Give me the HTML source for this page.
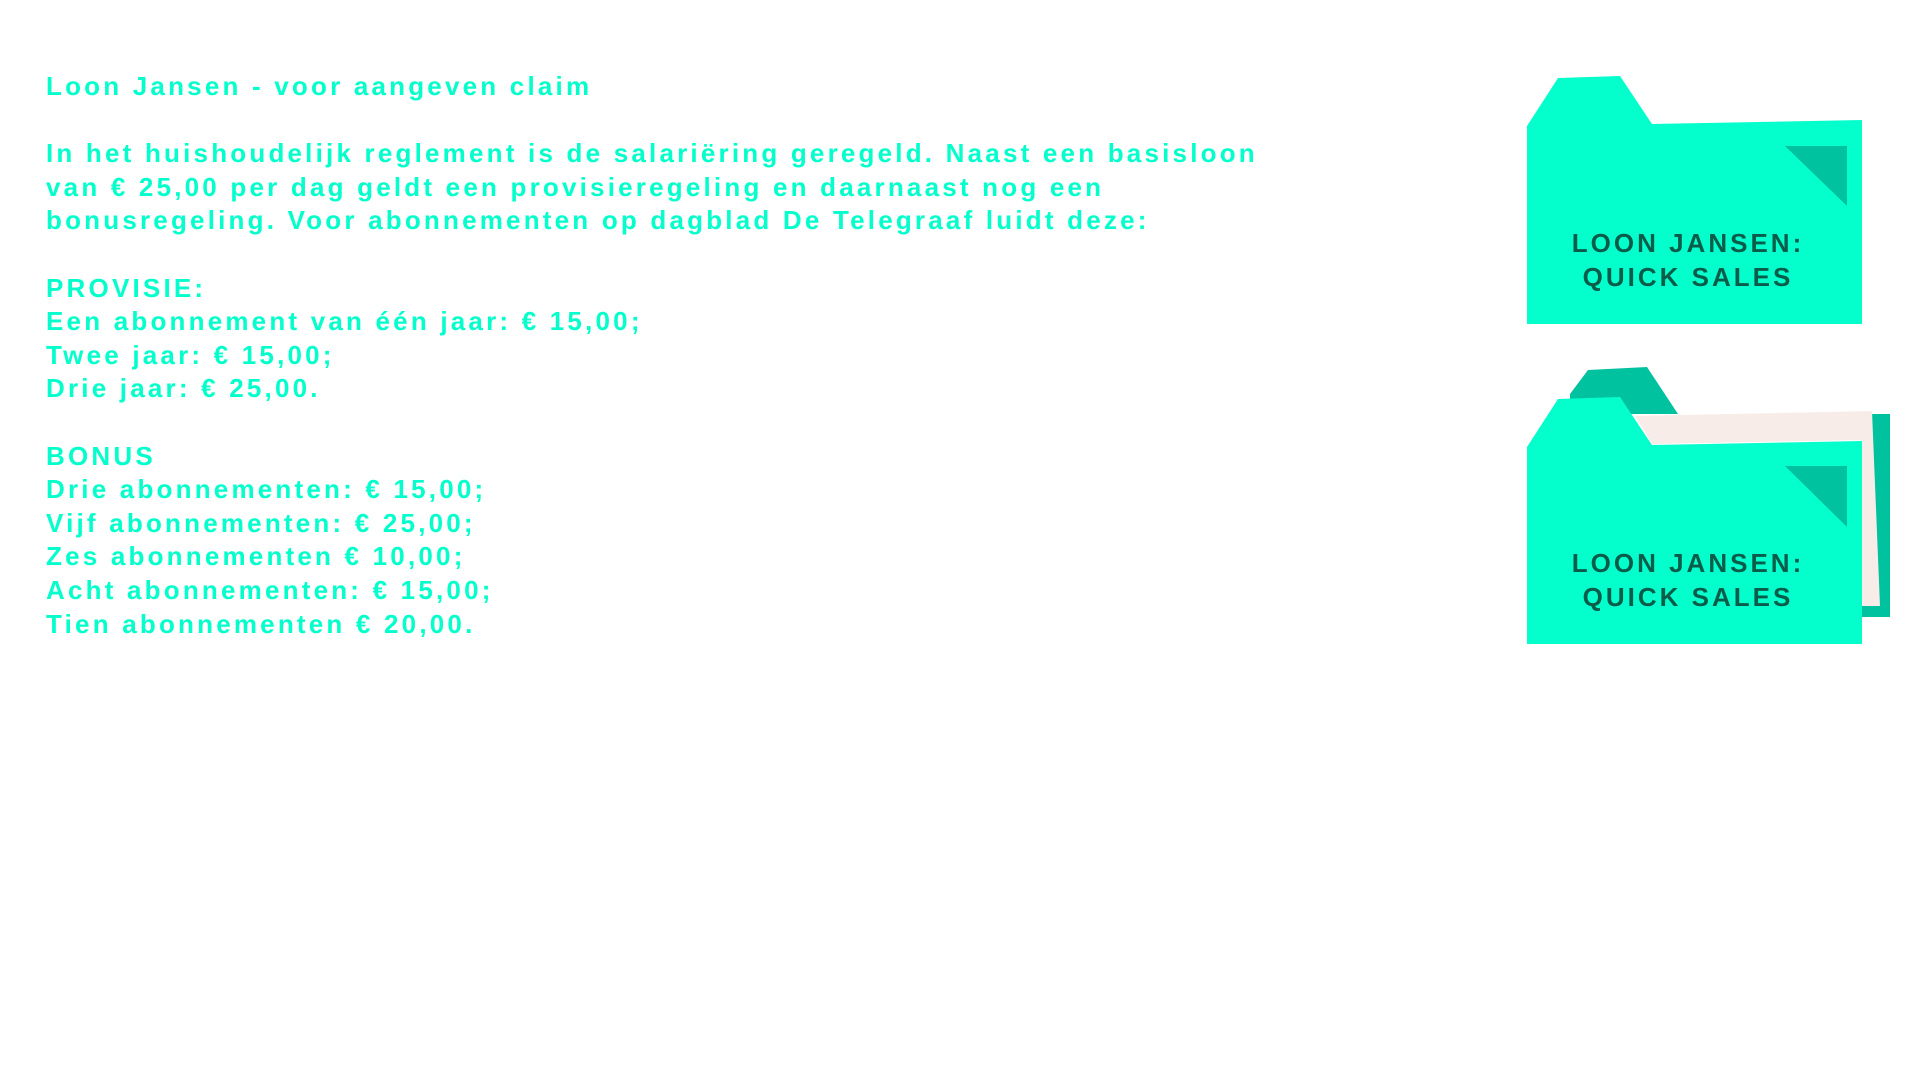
<!DOCTYPE html>
<html><head><meta charset="utf-8"><style>
html,body{margin:0;padding:0;background:#fff;width:1920px;height:1080px;overflow:hidden}
.t{position:absolute;left:46px;top:70px;color:#05ffcc;font-family:"Liberation Sans",sans-serif;font-weight:bold;font-size:26px;letter-spacing:3.2px;line-height:33.6px;white-space:pre}
svg{position:absolute;left:0;top:0}
</style></head><body>
<div class="t">Loon Jansen - voor aangeven claim

In het huishoudelijk reglement is de salariëring geregeld. Naast een basisloon
van € 25,00 per dag geldt een provisieregeling en daarnaast nog een
bonusregeling. Voor abonnementen op dagblad De Telegraaf luidt deze:

PROVISIE:
Een abonnement van één jaar: € 15,00;
Twee jaar: € 15,00;
Drie jaar: € 25,00.

BONUS
Drie abonnementen: € 15,00;
Vijf abonnementen: € 25,00;
Zes abonnementen € 10,00;
Acht abonnementen: € 15,00;
Tien abonnementen € 20,00.</div>
<svg width="1920" height="1080" viewBox="0 0 1920 1080">
<g font-family="Liberation Sans, sans-serif" font-weight="bold" font-size="26" fill="#0a5c4a" text-anchor="middle" letter-spacing="3">
<polygon points="1527,126 1558,78 1620,76 1652,124 1862,120 1862,324 1527,324" fill="#05ffcc"/>
<polygon points="1785,146 1847,146 1847,206" fill="#00c29e"/>
<text x="1688" y="252">LOON JANSEN:</text>
<text x="1688" y="286">QUICK SALES</text>

<polygon points="1570,394 1588,370 1647,367 1678,414 1890,414 1890,617 1862,617 1862,414 1570,414" fill="#00c29e"/>
<polygon points="1635,416 1872,411 1880,606 1862,606 1862,440 1652,444" fill="#f7ece8"/>
<polygon points="1527,447 1558,399 1620,397 1652,445 1862,441 1862,644 1527,644" fill="#05ffcc"/>
<polygon points="1785,466 1847,466 1847,527" fill="#00c29e"/>
<text x="1688" y="572">LOON JANSEN:</text>
<text x="1688" y="606">QUICK SALES</text>
</g>
</svg>
</body></html>
